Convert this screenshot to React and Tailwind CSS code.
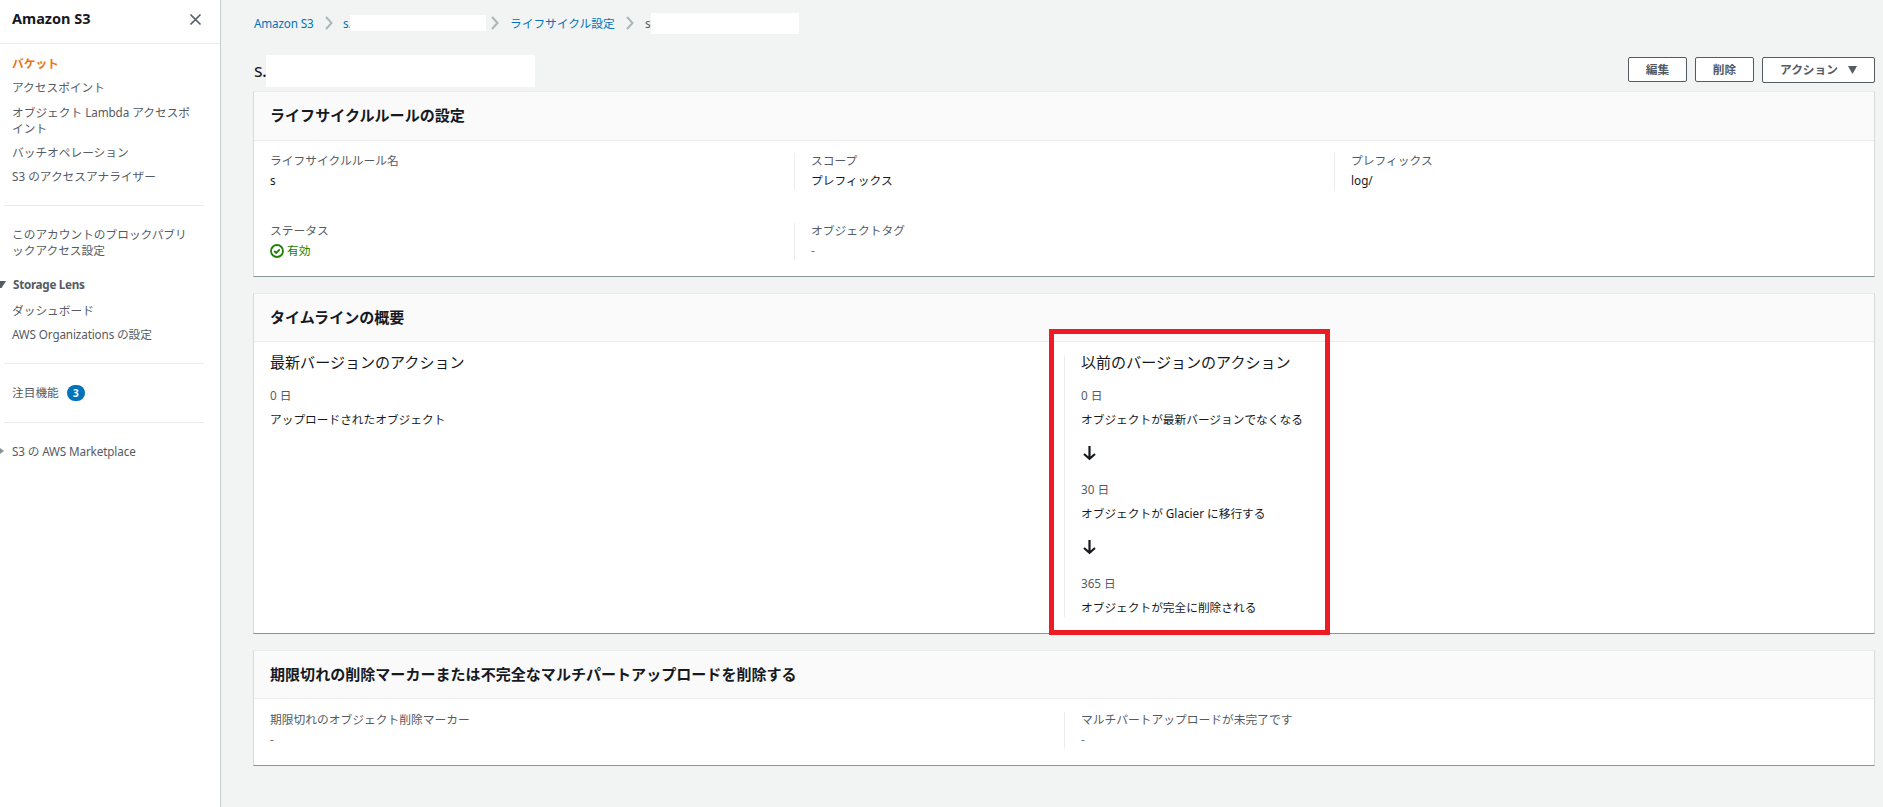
const navText = 'text-[11.7px] leading-4 text-[#545b64]';

function Chevron() {
    return (
        <svg width="8" height="14" viewBox="0 0 8 14" fill="none" stroke="#aab7b8" strokeWidth="2" className="shrink-0">
            <path d="M1 1l5.5 6L1 13" />
        </svg>
    );
}

function DownArrow() {
    return (
        <svg width="16" height="16" viewBox="0 0 16 16" fill="none" stroke="#16191f" strokeWidth="2.2" className="shrink-0">
            <path d="M8.5 1v12.5M3 9l5.5 4.8L14 9" />
        </svg>
    );
}

function CheckIcon() {
    return (
        <svg width="14" height="14" viewBox="0 0 14 14" fill="none" stroke="#1d8102" strokeWidth="1.8" className="shrink-0">
            <circle cx="7" cy="7" r="6" />
            <path d="M4.2 7l2 2 3.6-3.6" />
        </svg>
    );
}

function Card({ title, className, headerClass, children }) {
    return (
        <section className={`flex flex-col border border-x-[#d5dbdb] border-t-[#eaeded] border-b-[#879596] bg-white ${className}`}>
            <header className={`flex shrink-0 items-center border-b border-[#eaeded] bg-[#fafafa] px-4 pb-0.5 ${headerClass}`}>
                <h2 className="text-[15.05px] leading-5 font-bold text-[#16191f]">{title}</h2>
            </header>
            {children}
        </section>
    );
}

function Field({ label, divider, children }) {
    return (
        <div className={`h-[37px] pl-4 text-[11.75px] ${divider ? 'border-l border-[#eaeded]' : ''}`}>
            <div className="-mt-px h-[17px] leading-[17px] text-[#545b64]">{label}</div>
            <div className="mt-[3px] flex h-[17px] items-center leading-[17px] text-[#16191f]">{children}</div>
        </div>
    );
}

function Sidebar() {
    return (
        <nav className="flex h-full w-[221px] shrink-0 flex-col border-r border-[#c9cfd0] bg-white">
            <div className="flex h-11 shrink-0 items-start justify-between border-b border-[#eaeded] pt-2 pr-[18px] pl-3">
                <span className="text-[14.5px] leading-5 font-bold text-[#16191f]">Amazon S3</span>
                <svg width="13" height="13" viewBox="0 0 13 13" stroke="#545b64" strokeWidth="1.6" className="mt-[5px]">
                    <path d="M1.5 1.5l10 10M11.5 1.5l-10 10" />
                </svg>
            </div>

            <ul className={`flex flex-col gap-2 pt-[11px] pl-3 ${navText}`}>
                <li className="font-bold text-[#ec7211]">バケット</li>
                <li>アクセスポイント</li>
                <li className="mt-px">オブジェクト <span className="tracking-[-0.1px]">Lambda</span> アクセスポ<br />イント</li>
                <li>バッチオペレーション</li>
                <li>S3 のアクセスアナライザー</li>
            </ul>
            <hr className="mt-[21px] mr-4 ml-1 border-[#eaeded]" />

            <div className={`mt-5 pl-3 ${navText}`}>
                このアカウントのブロックパブリ<br />ックアクセス設定
            </div>
            <div className={`mt-[18px] flex items-center gap-[7px] font-bold tracking-[-0.3px] ${navText}`}>
                <svg width="6" height="7" viewBox="0 0 6 7" fill="#545b64">
                    <path d="M0 0h6L1.5 7H0z" />
                </svg>
                Storage Lens
            </div>
            <ul className={`flex flex-col gap-2 pt-2.5 pl-3 ${navText}`}>
                <li>ダッシュボード</li>
                <li className="tracking-[-0.13px]">AWS Organizations の設定</li>
            </ul>
            <hr className="mt-[21px] mr-4 ml-1 border-[#eaeded]" />

            <div className={`mt-[21px] flex items-center gap-2 pl-3 ${navText}`}>
                <span className="-mt-0.5">注目機能</span>
                <span className="flex h-4 w-[18px] items-center justify-center rounded-full bg-[#0073bb] text-[10px] font-bold text-white">3</span>
            </div>
            <hr className="mt-[21px] mr-4 ml-1 border-[#eaeded]" />

            <div className={`mt-5 flex items-center gap-2 tracking-[-0.13px] ${navText}`}>
                <svg width="4" height="6" viewBox="0 0 4 6" fill="#879596">
                    <path d="M0 0l4 3-4 3z" />
                </svg>
                S3 の AWS Marketplace
            </div>
        </nav>
    );
}

function Breadcrumbs() {
    return (
        <div className="flex h-[22px] items-center pl-px text-[11.7px] leading-4 text-[#0073bb]">
            <span className="w-[71px] tracking-[-0.15px]">Amazon S3</span>
            <Chevron />
            <span className="ml-2.5 w-[7px]">s.</span>
            <span className="h-4 w-[136px] bg-white" />
            <span className="ml-[5px] flex"><Chevron /></span>
            <span className="ml-[11px] w-[116px] whitespace-nowrap">ライフサイクル設定</span>
            <Chevron />
            <span className="ml-[11px] w-[6px] text-[#545b64]">s</span>
            <span className="h-[21px] w-[148px] bg-white" />
        </div>
    );
}

const buttonStyle = 'flex items-center justify-center rounded-xs border border-[#545b64] bg-white text-[11.7px] font-bold text-[#545b64]';

const previousVersions = [
    { day: '0 日', action: 'オブジェクトが最新バージョンでなくなる' },
    { day: '30 日', action: 'オブジェクトが Glacier に移行する' },
    { day: '365 日', action: 'オブジェクトが完全に削除される' },
];

export default function App() {
    return (
        <div className="flex h-[807px] w-[1883px] overflow-hidden bg-[#f2f3f3] font-['Noto_Sans','Noto_Sans_CJK_JP',sans-serif]">
            <Sidebar />

            <main className="flex flex-1 flex-col pt-3 pr-2 pl-8">
                <Breadcrumbs />

                <div className="mt-[21px] flex h-9 items-start pl-px">
                    <h1 className="w-3 text-[18px] leading-[30px] tracking-[-0.5px] text-[#16191f]">s.</h1>
                    <span className="h-8 w-[269px] bg-white" />
                    <div className="mt-0.5 ml-auto flex items-start gap-2">
                        <button className={`h-[25px] w-[59px] ${buttonStyle}`}>編集</button>
                        <button className={`h-[25px] w-[59px] ${buttonStyle}`}>削除</button>
                        <button className={`h-[26px] w-[113px] gap-2.5 ${buttonStyle}`}>
                            アクション
                            <svg width="9" height="8" viewBox="0 0 9 8" fill="#545b64">
                                <path d="M0 0h9L4.5 8z" />
                            </svg>
                        </button>
                    </div>
                </div>

                <Card title="ライフサイクルルールの設定" className="h-[186px]" headerClass="h-[49px]">
                    <div className="grid grid-cols-3 gap-y-[33px] pt-3">
                        <Field label="ライフサイクルルール名">s</Field>
                        <Field label="スコープ" divider>プレフィックス</Field>
                        <Field label="プレフィックス" divider>log/</Field>
                        <Field label="ステータス">
                            <CheckIcon />
                            <span className="ml-[3px] text-[#1d8102]">有効</span>
                        </Field>
                        <Field label="オブジェクトタグ" divider>
                            <span className="text-[#687078]">-</span>
                        </Field>
                    </div>
                </Card>

                <Card title="タイムラインの概要" className="mt-4 h-[341px]" headerClass="h-12">
                    <div className="grid grid-cols-2 pt-[13px] text-[11.7px] leading-4">
                        <div className="pl-4">
                            <h3 className="-mt-px text-[15.05px] text-[#16191f]">最新バージョンのアクション</h3>
                            <div className="mt-[17px] text-[#545b64]">0 日</div>
                            <div className="mt-2 text-[#16191f]">アップロードされたオブジェクト</div>
                        </div>
                        <div className="relative h-[262px] border-l border-[#eaeded] pl-4">
                            <h3 className="-mt-px text-[15.05px] text-[#16191f]">以前のバージョンのアクション</h3>
                            <div className="mt-[17px] flex flex-col">
                                {previousVersions.map((step, i) => (
                                    <div key={step.day} className="h-[94px] shrink-0">
                                        <div className="text-[#545b64]">{step.day}</div>
                                        <div className="mt-2 text-[#16191f]">{step.action}</div>
                                        {i < previousVersions.length - 1 && (
                                            <div className="mt-[18px]"><DownArrow /></div>
                                        )}
                                    </div>
                                ))}
                            </div>
                            {/* highlight around the previous version actions */}
                            <div className="absolute -top-[26px] -left-4 h-[306px] w-[281px] border-5 border-[#ed1c24]" />
                        </div>
                    </div>
                </Card>

                <Card title="期限切れの削除マーカーまたは不完全なマルチパートアップロードを削除する" className="mt-4 h-[116px]" headerClass="h-12">
                    <div className="grid grid-cols-2 pt-[13px]">
                        <Field label="期限切れのオブジェクト削除マーカー">
                            <span className="text-[#687078]">-</span>
                        </Field>
                        <Field label="マルチパートアップロードが未完了です" divider>
                            <span className="text-[#687078]">-</span>
                        </Field>
                    </div>
                </Card>
            </main>
        </div>
    );
}
